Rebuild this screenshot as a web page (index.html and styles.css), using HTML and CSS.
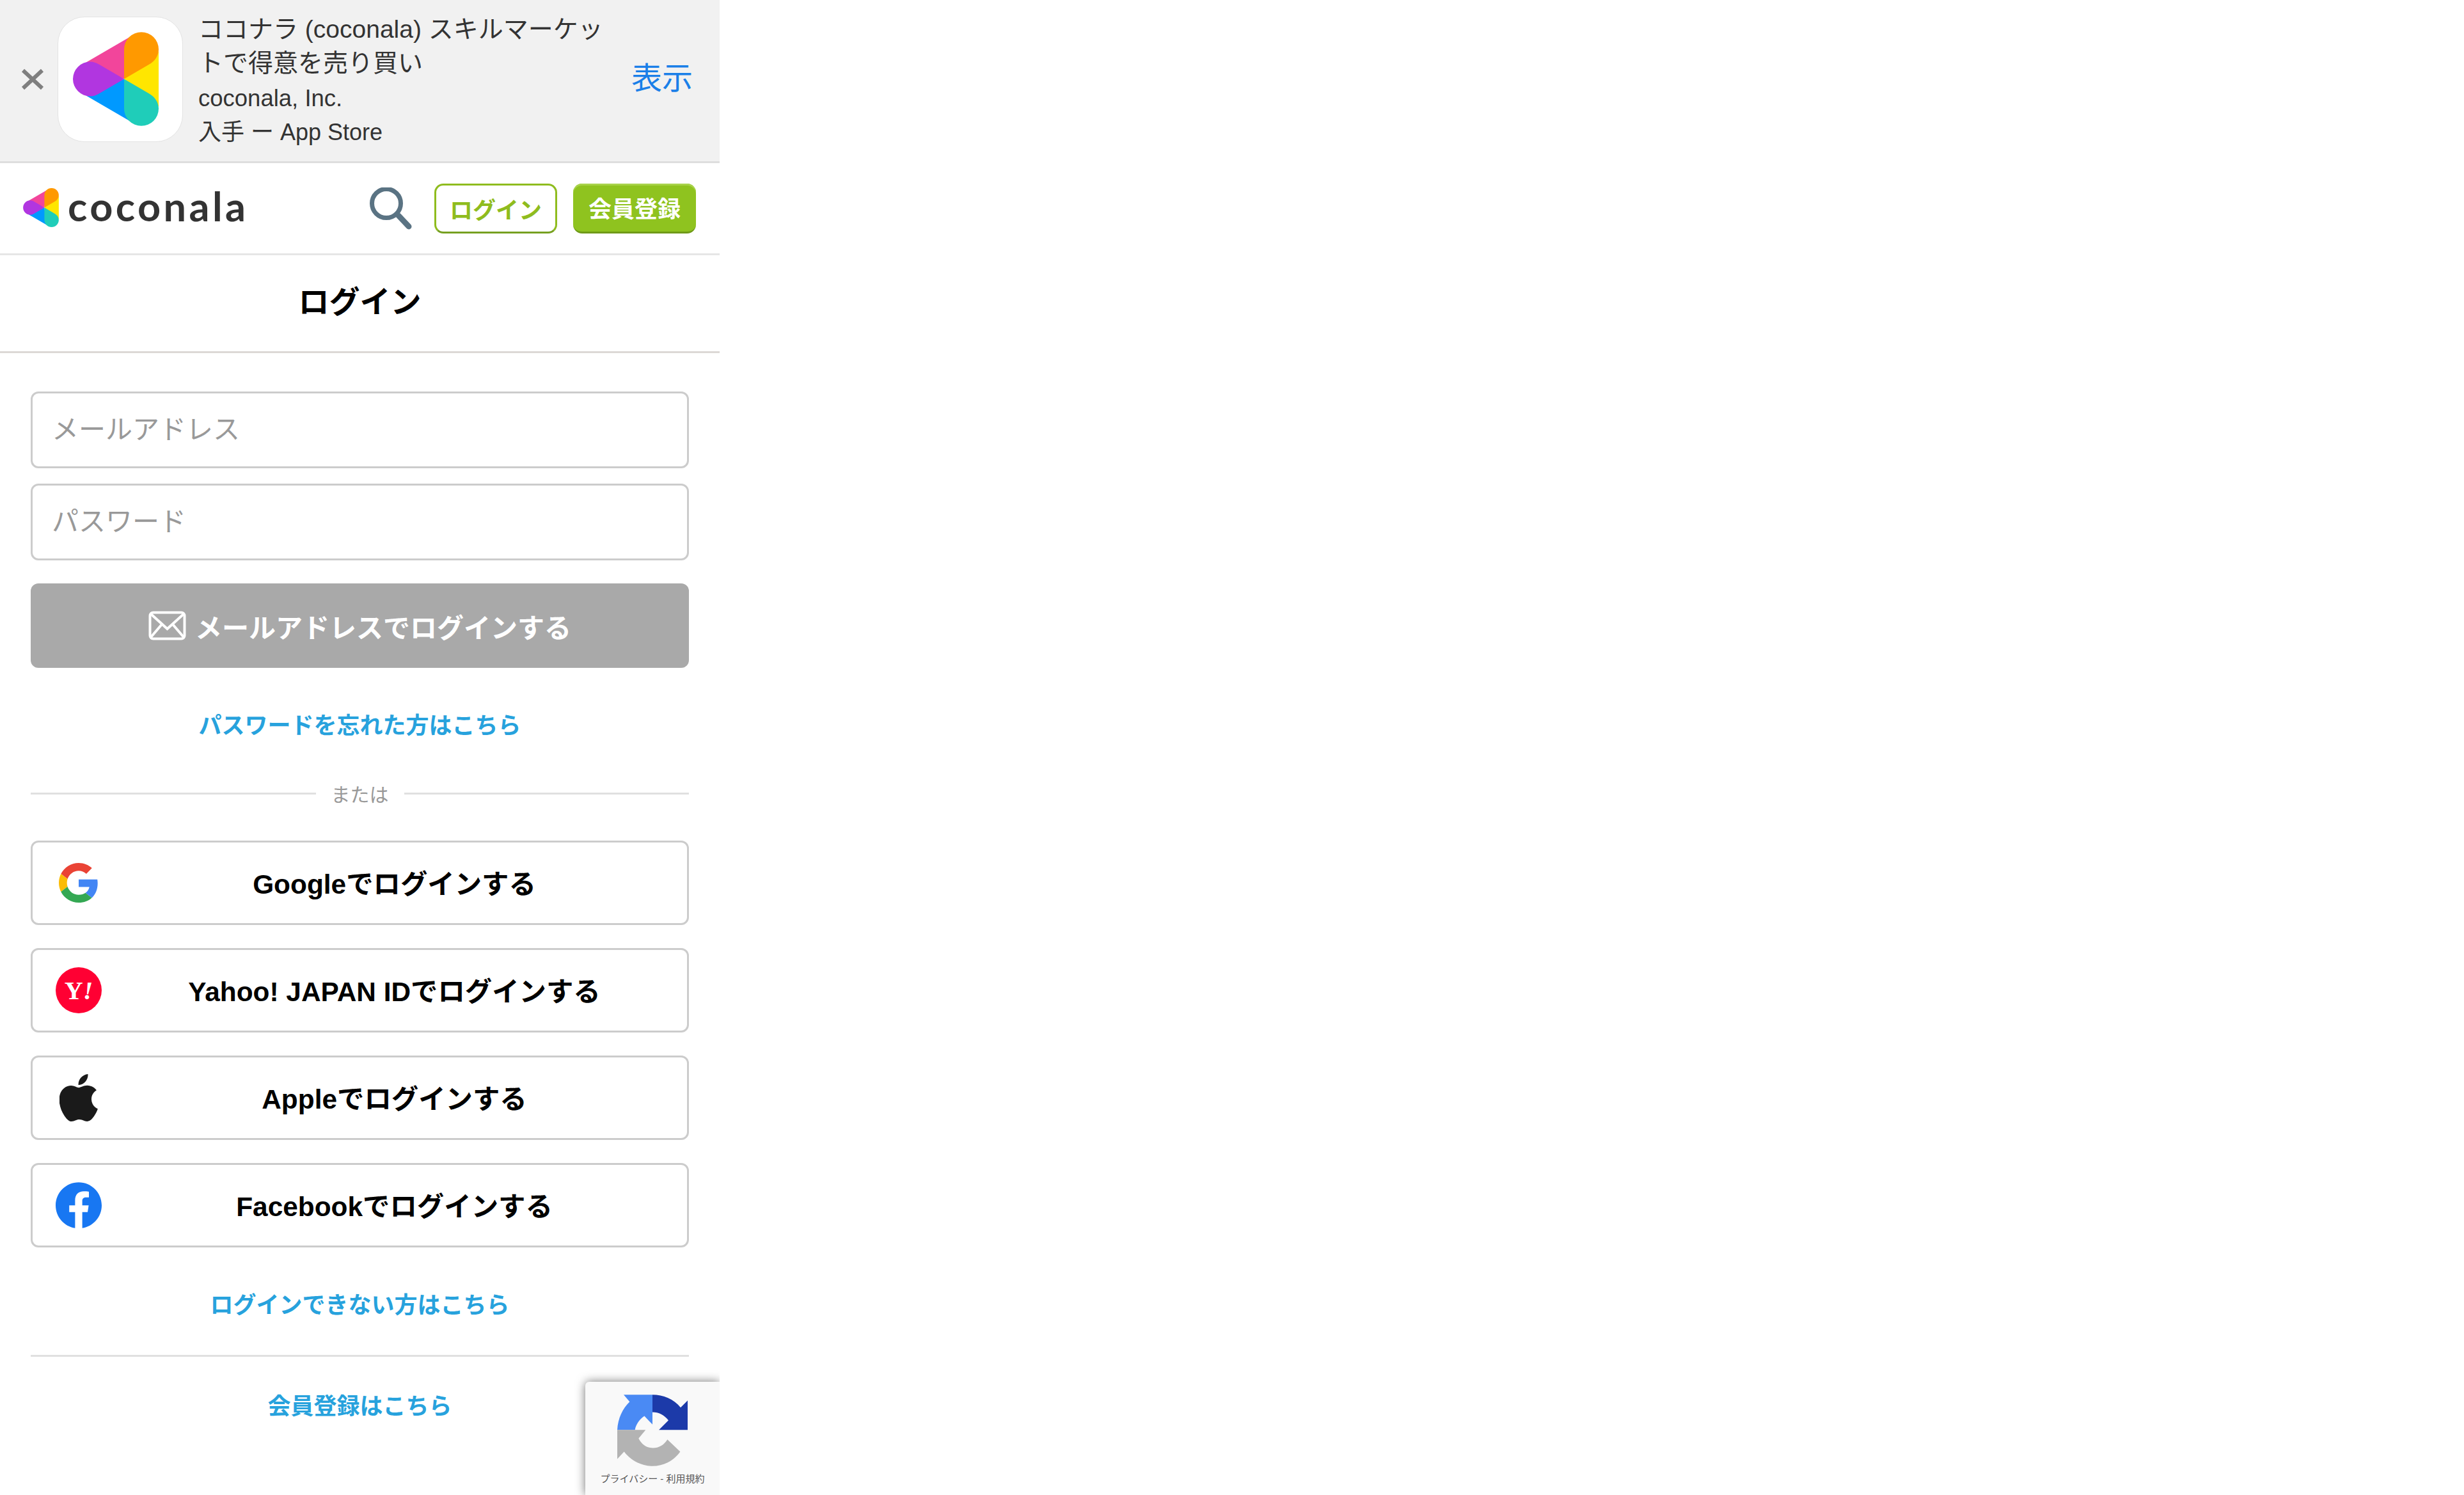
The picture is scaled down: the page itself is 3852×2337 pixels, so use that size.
FILE: index.html
```html
<!DOCTYPE html>
<html lang="ja">
<head>
  <meta charset="UTF-8" />
  <title>ログイン</title>
  <link rel="stylesheet" href="styles.css">
</head>
<body>
  <div class="page">
    <!-- App banner -->
    <div class="app-banner">
      <svg class="banner-close" viewBox="0 0 36 34"><path d="M3 3 L33 31 M33 3 L3 31" /></svg>
      <div class="app-icon">
        <svg class="mark mark-large" viewBox="0 0 402 440"><use href="#coco-mark" /></svg>
      </div>
      <div class="app-info">
        <div class="app-title">ココナラ (coconala) スキルマーケットで得意を売り買い</div>
        <div class="app-company">coconala, Inc.</div>
        <div class="app-store">入手 ー App Store</div>
      </div>
      <a class="app-view">表示</a>
    </div>

    <!-- Header -->
    <div class="topbar">
      <a class="logo">
        <svg class="mark mark-small" viewBox="0 0 402 440">
          <defs>
            <g id="coco-mark">
              <path fill="#f2459b" d="M240 220 L267 23 L62 142 Z" />
              <path fill="#ffe600" d="M240 220 L402 90 V350 Z" />
              <path fill="#0099ff" d="M240 220 L62 298 L267 417 Z" />
              <path fill="#ff9900" d="M240 220 V81 A81 81 0 0 1 402 81 C402 110 385 136 357 152 Z" />
              <path fill="#1fcdb9" d="M240 220 L357 288 C385 304 402 330 402 359 A81 81 0 0 1 240 359 Z" />
              <path fill="#b136e0" d="M240 220 L123 288 C110 296 96 301 81 301 A81 81 0 0 1 81 139 C96 139 110 144 123 152 Z" />
            </g>
          </defs>
          <use href="#coco-mark" />
        </svg>
        <span class="logo-text">coconala</span>
      </a>
      <div class="top-actions">
        <svg class="search-icon" viewBox="0 0 67 66">
          <circle cx="27" cy="25" r="22.5" />
          <path d="M46 44 L62 61" />
        </svg>
        <a class="btn-login">ログイン</a>
        <a class="btn-signup">会員登録</a>
      </div>
    </div>

    <h1 class="page-title">ログイン</h1>

    <div class="main-content">
      <input class="field" type="text" placeholder="メールアドレス">
      <input class="field field-next" type="password" placeholder="パスワード">
      <button class="btn-mail">
        <svg class="mail-icon" viewBox="0 0 59 46">
          <rect x="2.5" y="2.5" width="54" height="41" rx="5" />
          <path d="M3 4 L29.5 28 L56 4 M3 42 L21 21 M56 42 L38 21" />
        </svg>
        メールアドレスでログインする
      </button>
      <a class="text-link link-forgot">パスワードを忘れた方はこちら</a>

      <div class="divider"><span>または</span></div>

      <div class="social-list">
        <a class="social-btn">
          <span class="social-icon">
            <svg class="icon-google" viewBox="0 0 48 48">
              <path fill="#ea4335" d="M24 9.5c3.54 0 6.71 1.22 9.21 3.6l6.85-6.85C35.9 2.38 30.47 0 24 0 14.62 0 6.51 5.38 2.56 13.22l7.98 6.19C12.43 13.72 17.74 9.5 24 9.5z" />
              <path fill="#4285f4" d="M46.98 24.55c0-1.57-.15-3.09-.38-4.55H24v9.02h12.94c-.58 2.96-2.26 5.48-4.78 7.18l7.73 6c4.51-4.18 7.09-10.36 7.09-17.65z" />
              <path fill="#fbbc05" d="M10.53 28.59c-.48-1.45-.76-2.99-.76-4.59s.27-3.14.76-4.59l-7.98-6.19C.92 16.46 0 20.12 0 24c0 3.88.92 7.54 2.56 10.78l7.97-6.19z" />
              <path fill="#34a853" d="M24 48c6.48 0 11.93-2.13 15.89-5.81l-7.73-6c-2.15 1.45-4.92 2.3-8.16 2.3-6.26 0-11.57-4.22-13.47-9.91l-7.98 6.19C6.51 42.62 14.62 48 24 48z" />
            </svg>
          </span>
          <span class="social-label">Googleでログインする</span>
        </a>
        <a class="social-btn">
          <span class="social-icon"><span class="icon-yahoo">Y<i>!</i></span></span>
          <span class="social-label">Yahoo! JAPAN IDでログインする</span>
        </a>
        <a class="social-btn">
          <span class="social-icon">
            <svg class="icon-apple" viewBox="2.5 0 19.5 24">
              <path fill="#1a1a1a" d="M12.152 6.896c-.948 0-2.415-1.078-3.96-1.04-2.04.027-3.91 1.183-4.961 3.014-2.117 3.675-.546 9.103 1.519 12.09 1.013 1.454 2.208 3.09 3.792 3.039 1.52-.065 2.09-.987 3.935-.987 1.831 0 2.35.987 3.96.948 1.637-.026 2.676-1.48 3.676-2.948 1.156-1.688 1.636-3.325 1.662-3.415-.039-.013-3.182-1.221-3.22-4.857-.026-3.04 2.48-4.494 2.597-4.559-1.429-2.09-3.623-2.324-4.39-2.376-2-.156-3.675 1.09-4.61 1.09zM15.53 3.83c.843-1.012 1.4-2.427 1.245-3.83-1.207.052-2.662.805-3.532 1.818-.78.896-1.454 2.338-1.273 3.714 1.338.104 2.715-.688 3.559-1.701" />
            </svg>
          </span>
          <span class="social-label">Appleでログインする</span>
        </a>
        <a class="social-btn">
          <span class="social-icon">
            <svg class="icon-facebook" viewBox="0 0 24 24">
              <path fill="#1877f2" d="M24 12.073c0-6.627-5.373-12-12-12s-12 5.373-12 12c0 5.99 4.388 10.954 10.125 11.854v-8.385H7.078v-3.47h3.047V9.43c0-3.007 1.792-4.669 4.533-4.669 1.312 0 2.686.235 2.686.235v2.953H15.83c-1.491 0-1.956.925-1.956 1.874v2.25h3.328l-.532 3.47h-2.796v8.385C19.612 23.027 24 18.062 24 12.073z" />
            </svg>
          </span>
          <span class="social-label">Facebookでログインする</span>
        </a>
      </div>

      <a class="text-link link-trouble">ログインできない方はこちら</a>
      <hr class="rule">
      <a class="text-link link-signup">会員登録はこちら</a>
    </div>

    <!-- reCAPTCHA badge -->
    <div class="recaptcha">
      <svg class="recaptcha-icon" viewBox="495 180 330 335">
        <path fill="#4a8af4" d="M525 180 H660 V320 L622 280 C600 295 582 320 578 345 H495 C498 290 520 245 553 213 Z" />
        <path fill="#1c3aa9" d="M660 180 C710 180 760 200 792 240 L825 207 V345 H690 L735 300 C715 275 690 262 660 262 Z" />
        <path fill="#b3b3b3" d="M495 345 H628 L595 385 C610 415 635 430 662 430 C690 430 715 415 730 390 L790 447 C760 490 712 515 660 515 C610 515 560 490 527 447 L495 482 Z" />
      </svg>
      <div class="recaptcha-text">プライバシー - 利用規約</div>
    </div>
  </div>
</body>
</html>
```

FILE: styles.css
```css
body {
  margin: 0;
  background-color: #fff;
  font-family: "Liberation Sans", "Noto Sans CJK JP", sans-serif;
  color: #000;
}
.page {
  position: relative;
  width: 1125px;
  height: 2337px;
  overflow: hidden;
}

/* App banner */
.app-banner {
  display: flex;
  align-items: center;
  box-sizing: border-box;
  height: 255px;
  padding: 0 42px 5px 33px;
  background-color: #f1f1f1;
  border-bottom: 3px solid #dedede;
}
.banner-close {
  width: 36px;
  height: 34px;
  flex: none;
  fill: none;
  stroke: #7f7f7f;
  stroke-width: 6;
}
.app-icon {
  display: flex;
  align-items: center;
  justify-content: center;
  width: 194px;
  height: 194px;
  flex: none;
  margin-left: 21px;
  background-color: #fff;
  border: 1px solid #e3e3e3;
  border-radius: 42px;
}
.mark {
  display: block;
  flex: none;
}
.mark-large {
  width: 134px;
  height: 147px;
  margin-right: 14px;
}
.app-info {
  width: 650px;
  flex: none;
  margin: 4px 0 0 24px;
  color: #333;
}
.app-title {
  font-size: 39px;
  line-height: 53px;
}
.app-company {
  margin-top: 1px;
  font-size: 36.5px;
  line-height: 55px;
}
.app-store {
  font-size: 36px;
  line-height: 52px;
}
.app-view {
  margin: 0 0 11px auto;
  font-size: 48px;
  color: #1a7fe8;
}

/* Header */
.topbar {
  display: flex;
  align-items: center;
  justify-content: space-between;
  height: 141px;
  padding: 0 37px 0 36px;
  border-bottom: 3px solid #e6e6e6;
}
.logo {
  display: flex;
  align-items: center;
}
.mark-small {
  width: 56px;
  height: 61px;
  margin-bottom: 3px;
}
.logo-text {
  margin: 0 0 8px 14px;
  font-family: Lato, sans-serif;
  font-size: 63px;
  font-weight: 700;
  letter-spacing: 4.4px;
  line-height: 60px;
  color: #333;
}
.top-actions {
  display: flex;
  align-items: center;
}
.search-icon {
  width: 67px;
  height: 66px;
  margin-right: 35px;
  fill: none;
  stroke: #5a7383;
}
.search-icon circle {
  stroke-width: 7;
}
.search-icon path {
  stroke-width: 9;
  stroke-linecap: round;
}
.btn-login, .btn-signup {
  display: flex;
  align-items: center;
  justify-content: center;
  box-sizing: border-box;
  width: 192px;
  height: 78px;
  border-radius: 14px;
  font-size: 36px;
  font-weight: bold;
}
.btn-login {
  color: #8fbc1e;
  background-color: #fff;
  border: 3px solid #8fbc1e;
  border-bottom-color: #76a020;
}
.btn-signup {
  margin-left: 25px;
  color: #fff;
  background-color: #8fc31f;
  border-bottom: 3px solid #6f9a18;
  box-shadow: inset 0 3px 0 #a8d24a;
}

/* Title */
.page-title {
  margin: 0;
  height: 150px;
  font-size: 48px;
  font-weight: bold;
  line-height: 148px;
  text-align: center;
  border-bottom: 3px solid #dcd8d6;
}

/* Form */
.main-content {
  padding: 60px 48px 0;
}
.field {
  display: block;
  box-sizing: border-box;
  width: 100%;
  height: 120px;
  padding: 0 30px;
  font-family: inherit;
  font-size: 42px;
  background-color: #fff;
  border: 3px solid #ccc;
  border-radius: 12px;
  outline: none;
}
.field::placeholder {
  color: #999;
  opacity: 1;
}
.field-next {
  margin-top: 24px;
}
.btn-mail {
  display: flex;
  align-items: center;
  justify-content: center;
  box-sizing: border-box;
  width: 100%;
  height: 132px;
  margin-top: 36px;
  padding: 0;
  font-family: inherit;
  font-size: 42px;
  font-weight: bold;
  color: #fff;
  background-color: #a9a9a9;
  border: none;
  border-radius: 12px;
}
.mail-icon {
  width: 59px;
  height: 46px;
  margin-right: 14px;
  fill: none;
  stroke: #fff;
  stroke-width: 4;
}
.text-link {
  display: block;
  font-size: 36px;
  font-weight: bold;
  line-height: 54px;
  text-align: center;
  color: #27a2dd;
}
.link-forgot {
  margin-top: 64px;
}
.divider {
  display: flex;
  align-items: center;
  margin-top: 58px;
  height: 40px;
  font-size: 30px;
  color: #999;
}
.divider::before, .divider::after {
  content: "";
  flex: 1;
  height: 3px;
  background-color: #e0e0e0;
}
.divider span {
  padding: 0 24px;
}
.social-list {
  display: flex;
  flex-direction: column;
  gap: 36px;
  margin-top: 54px;
}
.social-btn {
  display: flex;
  align-items: center;
  box-sizing: border-box;
  height: 132px;
  padding-left: 36px;
  border: 3px solid #ccc;
  border-radius: 12px;
}
.social-icon {
  display: flex;
  align-items: center;
  justify-content: center;
  width: 72px;
  height: 74px;
  flex: none;
}
.social-label {
  flex: 1;
  padding-bottom: 4px;
  font-size: 42.4px;
  font-weight: bold;
  text-align: center;
}
.icon-google {
  width: 62px;
  height: 62px;
}
.icon-apple {
  width: 61px;
  height: 74px;
}
.icon-facebook {
  width: 72px;
  height: 72px;
}
.icon-yahoo {
  display: flex;
  align-items: center;
  justify-content: center;
  width: 72px;
  height: 72px;
  font-family: "Liberation Serif", serif;
  font-size: 40px;
  font-weight: bold;
  color: #fff;
  background-color: #ff0033;
  border-radius: 50%;
}
.link-trouble {
  margin-top: 64px;
}
.rule {
  height: 3px;
  margin: 50px 0 0;
  background-color: #e0e0e0;
  border: none;
}
.link-signup {
  margin-top: 51px;
}

/* reCAPTCHA badge */
.recaptcha {
  position: absolute;
  right: 0;
  bottom: 0;
  display: flex;
  flex-direction: column;
  align-items: center;
  width: 210px;
  height: 177px;
  background-color: #f9f9f9;
  border-radius: 6px 0 0 0;
  box-shadow: 0 0 15px rgba(0, 0, 0, 0.55);
}
.recaptcha-icon {
  width: 110px;
  height: 112px;
  margin-top: 20px;
}
.recaptcha-text {
  margin-top: 10px;
  font-size: 15px;
  line-height: 20px;
  white-space: nowrap;
  color: #555;
}
```
